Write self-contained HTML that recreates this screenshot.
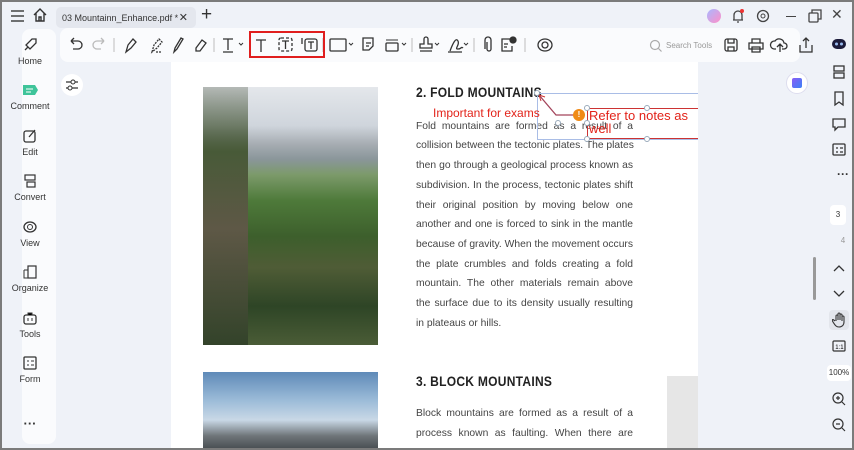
<!DOCTYPE html>
<html><head><meta charset="utf-8"><style>
*{margin:0;padding:0;box-sizing:border-box}
body{width:854px;height:450px;overflow:hidden;background:#7b7b7b;font-family:"Liberation Sans",sans-serif;position:relative}
.app{position:absolute;left:2px;top:2px;width:850px;height:446px;background:#eff2f8;overflow:hidden}
.abs{position:absolute}
.side{left:20px;top:27px;width:34px;height:415px;background:#fafbfd;border-radius:8px}
.navi{position:absolute;left:8px;width:40px;text-align:center;font-size:9px;color:#333}
.navi svg{display:block;margin:0 auto 3px}
.tb{left:58px;top:26px;width:740px;height:34px;background:#fafbfd;border-radius:8px}
.page{left:169px;top:60px;width:527px;height:386px;background:#fff;overflow:hidden}
.ln{position:absolute;left:245px;width:217px;font-size:10.3px;color:#444;height:14px;line-height:14px;text-align:justify;text-align-last:justify;white-space:nowrap}
.ln.l{text-align-last:left}
h2{position:absolute;left:245px;font-size:14px;font-weight:bold;color:#222;transform:scaleX(.86);transform-origin:left;letter-spacing:.3px;white-space:nowrap}
.rt{position:absolute;left:834px;width:14px;text-align:center;font-size:8px;color:#333}
.h{position:absolute;width:6px;height:6px;border-radius:50%;background:#fff;border:1px solid #9ab}
</style></head><body><div class="app">
<svg class="abs" style="left:8px;top:7px" width="16" height="14"><path d="M1 2h13M1 7h13M1 12h13" stroke="#444" stroke-width="1.5"/></svg>
<svg class="abs" style="left:30px;top:5px" width="16" height="16"><path d="M2 8L8 2l6 6M4 6v8h8V6M7 14v-4h2v4" stroke="#333" stroke-width="1.4" fill="none"/></svg>
<div class="abs" style="left:54px;top:5px;width:140px;height:21px;background:#e4e7ee;border-radius:5px;font-size:9px;color:#333;padding:6px 0 0 6px">03 Mountainn_Enhance.pdf *<span style="position:absolute;right:8px;top:4px;font-size:11px">✕</span></div>
<div class="abs" style="left:199px;top:2px;font-size:19px;color:#333">+</div>
<div class="abs" style="left:705px;top:7px;width:14px;height:14px;border-radius:50%;background:linear-gradient(135deg,#a9b7ff,#ff8fc8)"></div>
<svg class="abs" style="left:728px;top:6px" width="16" height="16"><path d="M4 12V7a4 4 0 018 0v5zM3 12h10M7 14h2" stroke="#444" stroke-width="1.3" fill="none"/><circle cx="12" cy="3" r="2" fill="#e33"/></svg>
<svg class="abs" style="left:753px;top:6px" width="16" height="16"><circle cx="8" cy="8" r="5.5" stroke="#444" stroke-width="1.3" fill="none"/><circle cx="8" cy="8" r="2" stroke="#444" fill="none"/></svg>
<div class="abs" style="left:784px;top:14px;width:10px;border-top:1.3px solid #444"></div>
<svg class="abs" style="left:806px;top:7px" width="14" height="14"><rect x="1" y="4" width="9" height="9" rx="1" stroke="#444" fill="none" stroke-width="1.3"/><path d="M4 4V1h9v9h-3" stroke="#444" fill="none" stroke-width="1.3"/></svg>
<div class="abs" style="left:829px;top:4px;font-size:14px;color:#444">✕</div>
<div class="abs side"></div>
<div class="navi" style="top:35px"><svg width="16" height="16"><path d="M3 13l3-3M10 2l4 0 0 4-6 6-4-4z" stroke="#333" stroke-width="1.3" fill="none"/></svg>Home</div>
<div class="navi" style="top:80px"><svg width="18" height="16"><path d="M2 3h12l3 5-3 5H2z" fill="#3fc49a"/><path d="M5 7h7M5 10h5" stroke="#fff"/></svg>Comment</div>
<div class="navi" style="top:126px"><svg width="16" height="16"><rect x="2" y="3" width="11" height="11" rx="2" stroke="#333" fill="none" stroke-width="1.3"/><path d="M7 9l6-7" stroke="#333" stroke-width="1.3"/></svg>Edit</div>
<div class="navi" style="top:171px"><svg width="16" height="16"><rect x="3" y="2" width="10" height="5" stroke="#333" fill="none" stroke-width="1.2"/><rect x="5" y="9" width="8" height="5" stroke="#333" fill="none" stroke-width="1.2"/></svg>Convert</div>
<div class="navi" style="top:217px"><svg width="16" height="16"><ellipse cx="8" cy="8" rx="6" ry="5" stroke="#333" fill="none" stroke-width="1.3"/><circle cx="8" cy="8" r="2.5" stroke="#333" fill="none"/></svg>View</div>
<div class="navi" style="top:262px"><svg width="16" height="16"><rect x="6" y="2" width="8" height="12" stroke="#333" fill="none" stroke-width="1.2"/><path d="M2 6h4M2 6v8h4" stroke="#333" fill="none"/></svg>Organize</div>
<div class="navi" style="top:308px"><svg width="16" height="16"><rect x="2" y="5" width="12" height="9" rx="2" stroke="#333" fill="none" stroke-width="1.3"/><path d="M6 5V3h4v2M6 8v3M10 8v3" stroke="#333"/></svg>Tools</div>
<div class="navi" style="top:353px"><svg width="16" height="16"><rect x="2" y="2" width="12" height="12" rx="1" stroke="#333" fill="none" stroke-width="1.3"/><path d="M5 6h2M9 6h3M5 10h2M9 10h3" stroke="#333"/></svg>Form</div>
<div class="navi" style="top:414px;font-size:13px;font-weight:bold">···</div>
<div class="abs tb"></div>
<div class="abs" style="left:59px;top:72px;width:22px;height:22px;border-radius:50%;background:#fff"></div>
<svg class="abs" style="left:63px;top:76px" width="14" height="14"><path d="M1 4h12M1 10h12" stroke="#333" stroke-width="1.2"/><circle cx="8" cy="4" r="2" fill="#fff" stroke="#333"/><circle cx="5" cy="10" r="2" fill="#fff" stroke="#333"/></svg>
<svg class="abs" style="left:66px;top:32px" width="490" height="22" fill="none" stroke="#333" stroke-width="1.3">
<path d="M3 7h7a4 4 0 010 8H5M3 7l3-3M3 7l3 3"/>
<path d="M36 7h-7a4 4 0 000 8h4M36 7l-3-3M36 7l-3 3" stroke="#bbb"/>
<path d="M46 4v14" stroke="#ccc"/>
<path d="M58 18l2-7 5-6 3 3-5 6z"/>
<path d="M84 18l2-7 5-6 3 3-5 6zM88 18h6" stroke-dasharray="2 1"/>
<path d="M106 18l1-4 6-10 2 1-6 10z"/>
<path d="M128 14l6-8 4 3-6 8h-4z"/>
<path d="M146 4v14" stroke="#ccc"/>
<path d="M155 5h10M160 5v11M155 18h10"/><path d="M171 9l2 2 2-2" stroke-width="1"/>
<path d="M188 6h10M193 6v12"/>
<rect x="211" y="4" width="13" height="13" rx="2" stroke-dasharray="3 2"/><path d="M214 7h7M217.5 7v8"/>
<rect x="237" y="5" width="12" height="12" rx="2"/><path d="M234 4v6M240 8h6M243 8v7"/>
<path d="M255 4v14" stroke="#ccc"/>
<rect x="262" y="5" width="16" height="12" rx="1"/><path d="M281 9l2 2 2-2" stroke-width="1"/>
<path d="M295 4h10v8l-4 4h-6zM298 9h5M298 12h3"/>
<rect x="318" y="9" width="12" height="8" rx="1"/><path d="M318 6h12M334 9l2 2 2-2" stroke-width="1"/>
<path d="M344 4v14" stroke="#ccc"/>
<path d="M356 5a2 2 0 014 0v5h4v4h-12v-4h4zM352 17h12"/><path d="M367 9l2 2 2-2" stroke-width="1"/>
<path d="M382 17c3-8 6-14 8-10s-4 8 0 8 3-3 5-1M380 18h14"/><path d="M396 9l2 2 2-2" stroke-width="1"/>
<path d="M406 4v14" stroke="#ccc"/>
<path d="M419 8v7a2 2 0 004 0V6a3 3 0 00-6 0v9"/>
<path d="M442 5h-8v12h10v-5M436 10h4M436 13h3"/><circle cx="445" cy="6" r="3" fill="#333"/>
<path d="M457 4v14" stroke="#ccc"/>
<ellipse cx="477" cy="11" rx="7" ry="6"/><circle cx="477" cy="11" r="3"/>
</svg>
<svg class="abs" style="left:647px;top:37px" width="14" height="14"><circle cx="6" cy="6" r="4.5" stroke="#aaa" fill="none" stroke-width="1.2"/><path d="M9.5 9.5l3 3" stroke="#aaa" stroke-width="1.2"/></svg>
<div class="abs" style="left:664px;top:39px;font-size:8px;color:#999">Search Tools</div>
<svg class="abs" style="left:720px;top:34px" width="100" height="18" fill="none" stroke="#333" stroke-width="1.3">
<rect x="3" y="3" width="12" height="12" rx="2"/><path d="M6 3v4h6V3M6 15v-4h6v4"/>
<path d="M30 7V3h8v4M27 7h14v6h-14zM30 11h8v5h-8z"/>
<path d="M54 13h-2a4 4 0 011-8 5 5 0 019 2 3 3 0 010 6h-2M58 16V9M55 11l3-3 3 3"/>
<path d="M78 9v7h12V9M84 12V2M81 5l3-3 3 3"/>
</svg>
<svg class="abs" style="left:829px;top:36px" width="16" height="12"><rect x="1" y="1" width="14" height="10" rx="5" fill="#1b1b3a"/><circle cx="5.5" cy="6" r="1.5" fill="#9be"/><circle cx="10.5" cy="6" r="1.5" fill="#9be"/></svg>
<div class="abs page">
<div class="abs" style="left:32px;top:25px;width:175px;height:258px;background:linear-gradient(180deg,#e4e7eb 0%,#cfd5dc 15%,#a7adb3 22%,#8a969a 28%,#7c9a6a 34%,#4e7a3a 44%,#3d5f2c 58%,#4f5c36 70%,#2e4526 85%,#4a5c36 100%)"></div>
<div class="abs" style="left:32px;top:25px;width:45px;height:258px;background:linear-gradient(180deg,rgba(70,80,60,.3) 0%,#485a38 25%,#5e5846 55%,#33432a 100%)"></div>
<div class="abs" style="left:32px;top:310px;width:175px;height:80px;background:linear-gradient(180deg,#5f8ab8 0%,#9bbbd8 35%,#c9d8e6 60%,#6e7478 80%,#3e4448)"></div>
<h2 style="top:22px">2. FOLD MOUNTAINS</h2>
<div class="ln" style="top:58px">Fold mountains are formed as a result of a</div>
<div class="ln" style="top:77px">collision between the tectonic plates. The plates</div>
<div class="ln" style="top:97px">then go through a geological process known as</div>
<div class="ln" style="top:117px">subdivision. In the process, tectonic plates shift</div>
<div class="ln" style="top:137px">their original position by moving below one</div>
<div class="ln" style="top:156px">another and one is forced to sink in the mantle</div>
<div class="ln" style="top:176px">because of gravity. When the movement occurs</div>
<div class="ln" style="top:196px">the plate crumbles and folds creating a fold</div>
<div class="ln" style="top:215px">mountain. The other materials remain above</div>
<div class="ln" style="top:235px">the surface due to its density usually resulting</div>
<div class="ln l" style="top:255px">in plateaus or hills.</div>
<h2 style="top:311px">3. BLOCK MOUNTAINS</h2>
<div class="ln" style="top:345px">Block mountains are formed as a result of a</div>
<div class="ln" style="top:365px">process known as faulting. When there are</div>
<div class="abs" style="left:496px;top:314px;width:31px;height:72px;background:#e6e6e6"></div>
<div class="abs" style="left:366px;top:31px;width:170px;height:47px;border:1px solid #a9bde6"></div>
<div class="abs" style="left:416px;top:46px;width:120px;height:31px;border-top:1.5px solid #c33;border-bottom:1.5px solid #c33;border-left:1.5px solid #c33"></div>
<svg class="abs" style="left:365px;top:30px" width="60" height="30"><path d="M3 3l17 20h18" stroke="#a3445b" stroke-width="1.3" fill="none"/><path d="M3 3l2 6M3 3l6 2" stroke="#c33" fill="none"/></svg>
<div class="abs" style="left:262px;top:44px;font-size:12px;color:#e2231a">Important for exams</div>
<div class="abs" style="left:418px;top:47px;font-size:13px;color:#e2231a;line-height:13px">Refer to notes as<br>well</div>
<div class="abs" style="left:402px;top:47px;width:12px;height:12px;border-radius:50%;background:#f08a16;color:#fff;font-size:8px;text-align:center;line-height:12px;font-weight:bold">!</div>
<div class="h" style="left:363px;top:28px"></div>
<div class="h" style="left:413px;top:43px"></div>
<div class="h" style="left:473px;top:43px"></div>
<div class="h" style="left:413px;top:58px"></div>
<div class="h" style="left:384px;top:58px"></div>
<div class="h" style="left:413px;top:74px"></div>
<div class="h" style="left:473px;top:74px"></div>
</div>
<div class="abs" style="left:784px;top:70px;width:22px;height:22px;border-radius:50%;background:#fff;border:1px solid #dde"></div>
<div class="abs" style="left:790px;top:76px;width:10px;height:10px;border-radius:2px;background:linear-gradient(135deg,#8a5cf6,#3b82f6)"></div>
<svg class="abs" style="left:829px;top:62px" width="16" height="120" fill="none" stroke="#333" stroke-width="1.3">
<rect x="3" y="2" width="10" height="5"/><rect x="3" y="9" width="10" height="5"/>
<path d="M4 28h8v13l-4-3-4 3z"/>
<path d="M2 55h12v8H7l-3 3v-3H2z"/>
<rect x="2" y="80" width="12" height="11" rx="1"/><path d="M5 84h2M9 84h3M5 88h2M9 88h3"/>
</svg>
<div class="rt" style="top:165px;font-size:12px;font-weight:bold">···</div>
<div class="abs" style="left:828px;top:203px;width:16px;height:20px;background:#fff;border-radius:4px;font-size:8px;text-align:center;line-height:20px;color:#333">3</div>
<div class="rt" style="top:234px;color:#999">4</div>
<div class="abs" style="left:811px;top:255px;width:3px;height:43px;background:#999;border-radius:2px"></div>
<svg class="abs" style="left:829px;top:259px" width="16" height="40" fill="none" stroke="#333" stroke-width="1.3"><path d="M3 10l5-5 5 5M3 30l5 5 5-5"/></svg>
<div class="abs" style="left:827px;top:308px;width:20px;height:20px;background:#e3e6ec;border-radius:4px"></div>
<svg class="abs" style="left:830px;top:310px" width="14" height="16" fill="none" stroke="#333" stroke-width="1.1"><path d="M4 9V4a1 1 0 012 0v4V2a1 1 0 012 0v6V3a1 1 0 012 0v6V5a1 1 0 012 0v5c0 3-2 5-5 5s-4-2-6-5l-1-2c1-1 2 0 3 1"/></svg>
<svg class="abs" style="left:829px;top:337px" width="16" height="14"><rect x="2" y="2" width="12" height="10" rx="1" stroke="#333" fill="none" stroke-width="1.2"/><text x="4.3" y="10" font-size="6" font-family="Liberation Sans">1:1</text></svg>
<div class="abs" style="left:825px;top:363px;width:24px;height:16px;background:#fff;border-radius:4px;font-size:8px;text-align:center;line-height:16px;color:#333">100%</div>
<svg class="abs" style="left:829px;top:388px" width="16" height="46" fill="none" stroke="#333" stroke-width="1.2"><circle cx="7" cy="8" r="5"/><path d="M11 12l3 3M5 8h4M7 6v4"/><circle cx="7" cy="34" r="5"/><path d="M11 38l3 3M5 34h4"/></svg>
</div>
<div class="abs" style="left:249px;top:31px;width:76px;height:27px;border:2.5px solid #e01e1e"></div>
</body></html>
